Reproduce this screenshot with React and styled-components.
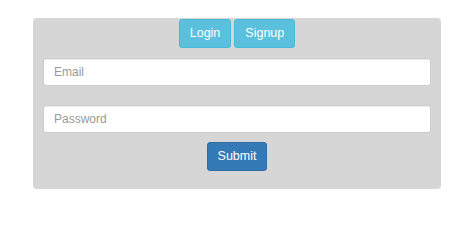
import React from "react";
import styled, { createGlobalStyle } from "styled-components";

const GlobalStyle = createGlobalStyle`
  body {
    margin: 0;
    background: #ffffff;
    font-family: "Liberation Sans", Arial, sans-serif;
  }
`;

const Page = styled.div`
  padding: 18px 33px;
`;

const Panel = styled.form`
  background: #d6d6d6;
  border-radius: 4px;
  padding: 1px 10px 18px;
  display: flex;
  flex-direction: column;
`;

const Tabs = styled.div`
  display: flex;
  justify-content: center;
  gap: 3px;
  margin-bottom: 10px;
`;

const Button = styled.button`
  height: 29px;
  padding: 0 10px;
  border-radius: 3px;
  border: 1px solid ${(p) => (p.$primary ? "#2e6da4" : "#46b8da")};
  background: ${(p) => (p.$primary ? "#337ab7" : "#5bc0de")};
  color: #fff;
  font-family: "Liberation Sans", Arial, sans-serif;
  font-size: 12.5px;
  line-height: 27px;
  cursor: pointer;
`;

const Input = styled.input`
  box-sizing: border-box;
  width: 100%;
  height: 28px;
  padding: 0 10px;
  border: 1px solid #cccccc;
  border-radius: 3px;
  background: #fff;
  font-family: "Liberation Sans", Arial, sans-serif;
  font-size: 12px;
  color: #555;
  box-shadow: inset 0 1px 1px rgba(0, 0, 0, 0.075);
  margin-bottom: ${(p) => p.$gap}px;
  &::placeholder {
    color: #999;
  }
`;

const Actions = styled.div`
  display: flex;
  justify-content: center;
`;

export default function App() {
  return (
    <>
      <GlobalStyle />
      <Page>
        <Panel onSubmit={(e) => e.preventDefault()}>
          <Tabs>
            <Button type="button">Login</Button>
            <Button type="button">Signup</Button>
          </Tabs>
          <Input type="email" placeholder="Email" $gap={19} />
          <Input type="password" placeholder="Password" $gap={9} />
          <Actions>
            <Button type="submit" $primary>
              Submit
            </Button>
          </Actions>
        </Panel>
      </Page>
    </>
  );
}
